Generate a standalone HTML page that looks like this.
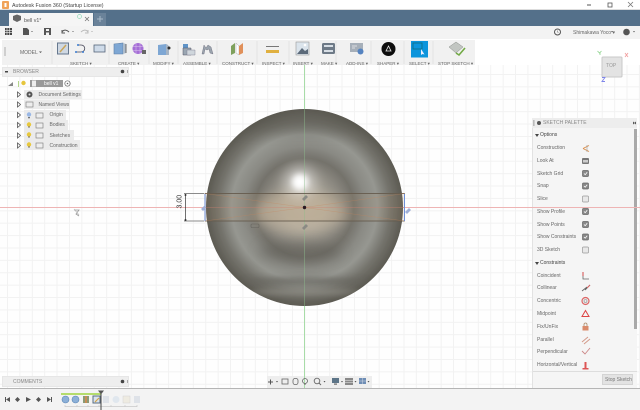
<!DOCTYPE html>
<html><head><meta charset="utf-8"><style>
html,body{margin:0;padding:0;width:640px;height:410px;overflow:hidden;background:#fff}
body{font-family:"Liberation Sans",sans-serif;position:relative}
.a{position:absolute}
.t{position:absolute;font-size:5px;line-height:7px;color:#666;white-space:nowrap;filter:blur(.35px);margin-top:.8px}
svg{position:absolute;left:0;top:0}
</style></head><body>
<div class="a" style="left:0;top:65px;width:640px;height:323px;background-color:#fefefe;background-image:linear-gradient(#f2f2f2 1px,transparent 1px),linear-gradient(90deg,#f2f2f2 1px,transparent 1px);background-size:12.4px 12.4px;background-position:7px 9px"></div>
<div class="a" style="left:0;top:0;width:640px;height:10px;background:#fff"></div>
<div class="a" style="left:0;top:9px;width:640px;height:1px;background:#ddd"></div>
<div class="a" style="left:0;top:10px;width:640px;height:16px;background:#54708a"></div>
<div class="a" style="left:94px;top:13px;width:12px;height:13px;background:#6a8299"></div>
<div class="a" style="left:9px;top:13px;width:84px;height:14px;background:#f5f5f5"></div>
<div class="a" style="left:0;top:26px;width:640px;height:13px;background:#f3f3f3"></div>
<div class="a" style="left:2px;top:40px;width:473px;height:25px;background:#f1f1f1"></div>
<div class="a" style="left:2px;top:67px;width:127px;height:10px;background:#eeeeee;border:1px solid #e6e6e6;box-sizing:border-box"></div>
<div class="a" style="left:2px;top:376px;width:127px;height:11px;background:#eeeeee;border:1px solid #e6e6e6;box-sizing:border-box"></div>
<div class="a" style="left:532px;top:118px;width:105px;height:272px;background:#f5f5f5;border-left:1px solid #e2e2e2;box-sizing:border-box"></div>
<div class="a" style="left:532px;top:118px;width:105px;height:10px;background:#ededed"></div>
<div class="a" style="left:634px;top:129px;width:3px;height:200px;background:#a9a9a9"></div>
<div class="a" style="left:533px;top:371px;width:104px;height:1px;background:#ddd"></div>
<div class="a" style="left:602px;top:374px;width:31px;height:11px;background:#e3e3e3;border:1px solid #d4d4d4;box-sizing:border-box"></div>
<div class="a" style="left:0;top:388px;width:640px;height:22px;background:#f3f3f3;border-top:1px solid #b5b5b5;box-sizing:border-box"></div>
<div class="a" style="left:267px;top:376px;width:105px;height:12px;background:#eeeeee"></div>

<svg width="640" height="410" viewBox="0 0 640 410">
<defs>
<radialGradient id="base" cx="304.5" cy="207.5" r="98.5" gradientUnits="userSpaceOnUse">
<stop offset="0" stop-color="#b3ad9f"/><stop offset=".2" stop-color="#aaa599"/>
<stop offset=".38" stop-color="#8b8880"/><stop offset=".5" stop-color="#74726b"/>
<stop offset=".62" stop-color="#8a8a84"/><stop offset=".74" stop-color="#969791"/>
<stop offset=".87" stop-color="#74736c"/><stop offset="1" stop-color="#5c5a52"/></radialGradient>
<filter id="b3" filterUnits="userSpaceOnUse" x="180" y="90" width="250" height="240"><feGaussianBlur stdDeviation="3"/></filter>
<filter id="b6" filterUnits="userSpaceOnUse" x="180" y="90" width="250" height="240"><feGaussianBlur stdDeviation="6"/></filter>
<filter id="b03" filterUnits="userSpaceOnUse" x="0" y="0" width="640" height="410"><feGaussianBlur stdDeviation=".35"/></filter>
<clipPath id="sp"><circle cx="304.5" cy="207.5" r="98.5"/></clipPath>
</defs>
<line x1="0" y1="207.5" x2="640" y2="207.5" stroke="#eeb4b4" stroke-width="1"/>
<line x1="304.5" y1="65" x2="304.5" y2="388" stroke="#a8dca8" stroke-width="1"/>
<circle cx="304.5" cy="207.5" r="98.5" fill="url(#base)" filter="url(#b03)"/>
<g clip-path="url(#sp)">
<ellipse cx="305" cy="122" rx="90" ry="12" fill="#56544d" opacity=".35" filter="url(#b6)"/>
<ellipse cx="300" cy="213" rx="46" ry="20" fill="#c2b5a1" opacity=".65" filter="url(#b6)"/>
<ellipse cx="300" cy="252" rx="42" ry="9" fill="#5d5b54" opacity=".5" filter="url(#b6)"/>
<ellipse cx="305" cy="281" rx="62" ry="3.500" fill="#64625b" opacity=".65" filter="url(#b3)"/>
<ellipse cx="305" cy="292" rx="55" ry="3" fill="#9a9890" opacity=".55" filter="url(#b3)"/>
<circle cx="300" cy="182" r="16" fill="#fff" opacity=".45" filter="url(#b6)"/>
<circle cx="300" cy="182" r="8" fill="#fff" filter="url(#b3)"/>
<line x1="304.5" y1="109" x2="304.5" y2="306" stroke="#8fbf8f" stroke-width=".8" opacity=".55"/>
</g>
<rect x="205" y="193.500" width="199.500" height="27.500" fill="#c89a70" fill-opacity=".1" stroke="#7a5f45" stroke-width=".7"/>
<line x1="205" y1="193.500" x2="404.500" y2="193.500" stroke="#5d5a52" stroke-width=".8" opacity=".8"/>
<line x1="205" y1="221" x2="404.500" y2="221" stroke="#5d5a52" stroke-width=".8" opacity=".8"/>
<line x1="205" y1="207.500" x2="404.500" y2="207.500" stroke="#d08070" stroke-width=".6" opacity=".7"/>
<path d="M205 193.500L304.500 207.500L404.500 193.500M205 221L304.500 207.500L404.500 221" stroke="#c8845a" stroke-width=".5" fill="none" opacity=".45"/>
<line x1="205" y1="194" x2="205" y2="221" stroke="#6e8fd6" stroke-width="1"/>
<line x1="404.500" y1="194" x2="404.500" y2="221" stroke="#6e8fd6" stroke-width="1"/>
<path d="M201 209l3-3 2 2-3 3zM405 212l4-4 2 2-4 4z" fill="#9fb0d8"/>
<circle cx="304.500" cy="207.500" r="1.700" fill="#2a1a22"/>
<path d="M302 199l4-4 2 2-4 4zM302 228l4-4 2 2-4 4z" fill="#8a8a84"/>
<rect x="251" y="224" width="8" height="3.500" rx="1" fill="none" stroke="#66645e" stroke-width=".6"/>
<path d="M184 193.500h20M184 221h20" stroke="#8b8b8b" stroke-width="1"/>
<line x1="185.500" y1="194" x2="185.500" y2="221" stroke="#333" stroke-width=".7"/>
<circle cx="185.500" cy="195" r="1" fill="#333"/><circle cx="185.500" cy="220" r="1" fill="#333"/>
<path d="M74 210h5l-3 4 3 2" stroke="#999" stroke-width=".8" fill="none"/>
<path d="M74 209l5 6" stroke="#bbb" stroke-width=".8"/>

<g filter="url(#b03)">
<rect x="2" y="1" width="7" height="8" rx="1" fill="#f0a35a"/>
<rect x="4.500" y="3" width="2" height="4" fill="#fff"/>
<path d="M587 5h4" stroke="#555"/><rect x="608" y="3" width="4" height="4" fill="none" stroke="#555" stroke-width=".8"/><path d="M628 2l5 5M633 2l-5 5" stroke="#777" stroke-width=".8"/>
<path d="M13 16l4-1.500 4 1.500v4l-4 2-4-2z" fill="#666"/>
<path d="M85 17l4 4M89 17l-4 4" stroke="#777" stroke-width=".8"/>
<circle cx="79.500" cy="16.500" r="2" fill="none" stroke="#8fd8b8" stroke-width=".7"/>
<path d="M100 16v6M97 19h6" stroke="#a9bac9" stroke-width="1"/>
<g fill="#444"><rect x="5" y="28" width="7" height="7"/></g>
<path d="M7 28v7M9.500 28v7M5 30.300h7M5 32.600h7" stroke="#f3f3f3" stroke-width=".6"/>
<path d="M23 28h4l2 2v5h-6z" fill="#555"/><path d="M31 31h2l-1 1z" fill="#555"/>
<rect x="44" y="28" width="7" height="7" fill="#555"/><rect x="46" y="29" width="3" height="2" fill="#f3f3f3"/><rect x="46" y="32.500" width="3" height="2.500" fill="#f3f3f3"/>
<path d="M62 32c2-3 5-2 7 0M62 30v3h3" stroke="#555" stroke-width="1" fill="none"/><path d="M72 31h2l-1 1z" fill="#666"/>
<path d="M88 32c-2-3-5-2-7 0M88 30v3h-3" stroke="#bbb" stroke-width="1" fill="none"/><path d="M91 31h2l-1 1z" fill="#aaa"/>
<circle cx="557.500" cy="32" r="3" fill="none" stroke="#555" stroke-width="1"/><path d="M557.500 30.500v1.500l1 1" stroke="#555" stroke-width=".5" fill="none"/>
<circle cx="626.500" cy="32" r="3.300" fill="#555"/><path d="M633 31h2l-1 1.500z" fill="#666"/><path d="M611 31h2l-1 1.500z" fill="#666"/>

<path d="M5 47v9" stroke="#cfcfcf" stroke-width="2"/>
<path d="M52 41v23M109 41v23M149 41v23M178 41v23M217 41v23M257 41v23M289 41v23M336 41v23M371 41v23M404 41v23M433 41v23" stroke="#dcdcdc" stroke-width=".7"/>
<path d="M39 51.500h3l-1.500 1.500z" fill="#555"/>
<rect x="57.500" y="43" width="11" height="11" fill="#cfd8e3" stroke="#66788e"/>
<path d="M60 52l6-7" stroke="#c9a55a" stroke-width="1.500"/>
<path d="M76 52h5c5 0 5-7 0-7h-3" fill="none" stroke="#445" stroke-width=".8"/>
<circle cx="76" cy="52" r="1" fill="#3a7bd0"/><circle cx="83" cy="52" r="1" fill="#3a7bd0"/><circle cx="78" cy="45" r="1" fill="#3a7bd0"/>
<rect x="94" y="45" width="11" height="7" fill="#cfdbe9" stroke="#55657a" stroke-width=".8"/>
<path d="M114 44l9-1v11h-9z" fill="#7ea7d4" stroke="#5e7fa6" stroke-width=".6"/><path d="M123 43l3 1v9l-3 1z" fill="#aebccb"/>
<path d="M126 44v9" stroke="#555" stroke-width=".8"/>
<circle cx="138" cy="48.500" r="5.500" fill="#a56ed6"/><path d="M133 46.500h10M133 50.500h10M136 43.500v10M140 43.500v10" stroke="#ddc8ee" stroke-width=".5"/>
<rect x="142" y="50" width="4" height="4" fill="#666"/>
<path d="M158 45l8-1 2 1v10h-10z" fill="#7ea7d4"/><path d="M166 44l3 2v9h-3z" fill="#a6b4c4"/><circle cx="169" cy="48" r="1.500" fill="#333"/>
<rect x="183" y="44" width="5" height="5" fill="#5f93c7"/><path d="M183 48h8v7h-8z" fill="#9aa6b2" stroke="#556" stroke-width=".5"/><path d="M187 50h8v5h-8z" fill="#cfd6dc" stroke="#778" stroke-width=".4"/>
<path d="M202 54l2-9 2 3 2-3 3 2 2 7-3-1-1-4-2 1-2-1-1 5z" fill="#9aa3ad" stroke="#667" stroke-width=".4"/>
<path d="M231 46l4-3v10l-4 2z" fill="#7ea05c"/><path d="M236 43l3 3v9l-3-2z" fill="#fff" stroke="#999" stroke-width=".4"/><path d="M239 46l4-3v10l-4 2z" fill="#e0905a"/>
<rect x="266" y="46" width="13" height="1" fill="#777"/><rect x="266" y="50" width="13" height="3" fill="#e0b040"/>
<rect x="296" y="42" width="13" height="13" fill="#dbe4ec" stroke="#999" stroke-width=".6"/><path d="M297 54l5-6 3 3 3-2v5z" fill="#5b6b7a"/><circle cx="305" cy="45" r="1.300" fill="#fff"/>
<rect x="322" y="43" width="13" height="11" rx="1.500" fill="#6e7a87"/><rect x="324" y="45" width="9" height="2" fill="#d7dee5"/><rect x="324" y="50" width="9" height="2" fill="#d7dee5"/>
<rect x="350" y="43" width="13" height="9" fill="#a6afb9"/><path d="M352 46h5M352 48h3" stroke="#eee" stroke-width=".7"/><circle cx="360.500" cy="51.500" r="3" fill="#5583c0"/>
<circle cx="388.500" cy="49" r="7" fill="#0a0a0a"/><path d="M388.500 46l-2.500 5h5z" fill="none" stroke="#eee" stroke-width=".8"/>
<rect x="411" y="41" width="17" height="16.500" fill="#1095dc"/><rect x="413" y="43" width="9" height="6" fill="none" stroke="#0d6c80" stroke-width=".8"/><path d="M421 49v6l1.500-1 2 .5z" fill="#eef"/>
<path d="M449 47l7-5 7 5-7 6z" fill="#c2c6c2" stroke="#8a8e8a" stroke-width=".5"/><path d="M456 53l3 2 6-7" fill="none" stroke="#72aa45" stroke-width="1.600"/>

<rect x="5" y="71" width="3" height="1.500" fill="#444"/>
<circle cx="122.500" cy="71.500" r="1.800" fill="#444"/><rect x="127" y="70" width=".8" height="3" fill="#999"/>
<path d="M13 86l0-4-5 4z" fill="#888"/><rect x="18" y="81" width="1" height="6" fill="#b4d68a"/>
<circle cx="23.500" cy="83" r="2.200" fill="#e6c63c"/>
<rect x="30" y="80" width="33" height="7" fill="#9a9a9a"/><rect x="32" y="80.500" width="4" height="6" fill="#eee"/>
<circle cx="67.500" cy="83.500" r="2.700" fill="none" stroke="#666" stroke-width=".7"/><circle cx="67.500" cy="83.500" r=".8" fill="#666"/>
<g fill="#ebebeb"><rect x="24" y="90" width="58" height="9"/><rect x="24" y="100" width="46" height="9"/><rect x="24" y="110" width="42" height="10"/><rect x="24" y="120" width="44" height="10"/><rect x="24" y="130" width="50" height="10"/><rect x="24" y="140" width="56" height="10"/></g>
<g fill="none" stroke="#555" stroke-width=".8"><path d="M17.500 92v5l3-2.500zM17.500 102v5l3-2.500zM17.500 112.500v5l3-2.500zM17.500 122.500v5l3-2.500zM17.500 133v5l3-2.500zM17.500 143v5l3-2.500z"/></g>
<circle cx="29.500" cy="94.500" r="3" fill="#555"/><circle cx="29.500" cy="94.500" r="1" fill="#ddd"/>
<g fill="#eee" stroke="#777" stroke-width=".6"><rect x="26" y="102" width="7" height="5"/><rect x="36" y="113" width="7" height="5"/><rect x="36" y="123" width="7" height="5"/><rect x="36" y="133" width="7" height="5"/><rect x="36" y="143" width="7" height="5"/></g>
<circle cx="29" cy="114.500" r="2.200" fill="#9ab8e6"/><rect x="28" y="117" width="2" height="1.300" fill="#777"/>
<g fill="#e8c83c"><circle cx="29" cy="124.500" r="2.200"/><circle cx="29" cy="134.500" r="2.200"/><circle cx="29" cy="144.500" r="2.200"/></g>
<path d="M28 127h2M28 137h2M28 147h2" stroke="#777" stroke-width="1"/>

<rect x="602" y="57" width="20" height="20" rx="1" fill="#e3e3e3" stroke="#c8c8c8" stroke-width="1"/>
<path d="M600 52l0 3M597.500 51l2 2 2-2" stroke="#8fd48f" stroke-width=".8" fill="none"/>
<path d="M625 53l3 4M628 53l-3 4" stroke="#f2a0a0" stroke-width=".9"/>
<path d="M602 77.500h3l-3 4h3" stroke="#7f86ea" stroke-width=".9" fill="none"/>

<circle cx="539" cy="123" r="2" fill="#555"/><rect x="533.500" y="120" width=".8" height="6" fill="#888"/><path d="M633 121.500l2 1.500-2 1.500zM636 121.500l-2 1.500 2 1.500z" fill="#555"/>
<path d="M535 134h4l-2 3zM535 262h4l-2 3z" fill="#444"/>
<path d="M583 148.500l6-3M583 148.500l6 3" stroke="#d98b45" stroke-width=".9"/><path d="M587 145v7" stroke="#999" stroke-width=".6"/>
<rect x="582" y="158" width="7" height="6" rx="1" fill="#777"/><rect x="583" y="160" width="5" height="2.500" fill="#ccc"/>
<g fill="#e8e8e8" stroke="#666" stroke-width=".7">
<rect x="582.500" y="170.500" width="6" height="6" rx="1" fill="#888"/><rect x="582.500" y="183" width="6" height="6" rx="1" fill="#888"/>
<rect x="582.500" y="196" width="6" height="6" rx="1" stroke="#999"/><rect x="582.500" y="208.500" width="6" height="6" rx="1" fill="#888"/>
<rect x="582.500" y="221.500" width="6" height="6" rx="1" fill="#888"/><rect x="582.500" y="234" width="6" height="6" rx="1" fill="#888"/>
<rect x="582.500" y="247" width="6" height="6" rx="1" stroke="#999"/></g>
<path d="M584 173.500l1.200 1.200 2-2.500M584 186l1.200 1.200 2-2.500M584 211.500l1.200 1.200 2-2.500M584 224.500l1.200 1.200 2-2.500M584 237l1.200 1.200 2-2.500" stroke="#fff" stroke-width=".8" fill="none"/>
<path d="M583 272v7h6" stroke="#666" stroke-width=".8" fill="none"/><path d="M583 272v4" stroke="#d44" stroke-width=".9"/>
<path d="M582 291l5-4M585 290l5-5" stroke="#666" stroke-width=".9"/><path d="M587 288l3-3" stroke="#d66" stroke-width=".9"/>
<circle cx="585.500" cy="301" r="3.500" fill="#eee" stroke="#d66" stroke-width="1.200"/><circle cx="585.500" cy="301" r="1.500" fill="none" stroke="#888" stroke-width=".6"/>
<path d="M585.500 310.500l3.500 6h-7z" fill="none" stroke="#d44" stroke-width="1"/>
<rect x="582.500" y="326" width="6" height="4.500" fill="#d98a6a"/><path d="M584 326v-1.500a1.500 1.500 0 0 1 3 0v1.500" stroke="#a86" fill="none" stroke-width=".8"/>
<path d="M582 342l6-5M584 344l6-5" stroke="#d49a8a" stroke-width="1"/>
<path d="M582 351l3 3 5-6" stroke="#c88" stroke-width=".9" fill="none"/>
<rect x="584.500" y="362" width="2" height="6" fill="#d55"/><rect x="582.500" y="368" width="6" height="1.500" fill="#d55"/>

<circle cx="122.500" cy="381.500" r="1.800" fill="#444"/><rect x="127" y="380" width=".8" height="3" fill="#999"/>
<path d="M268 382h5M270.500 379.500v5" stroke="#555" stroke-width="1"/><path d="M276 381h2l-1 1.500z" fill="#555"/>
<rect x="282" y="379" width="6" height="5" fill="none" stroke="#666" stroke-width=".8"/>
<rect x="293" y="378.500" width="5" height="6" rx="2" fill="none" stroke="#666" stroke-width=".8"/>
<circle cx="305" cy="381" r="2.500" fill="none" stroke="#666" stroke-width=".8"/><path d="M305 383v2" stroke="#666"/>
<circle cx="317" cy="381" r="2.800" fill="none" stroke="#666" stroke-width=".9"/><path d="M319 383l2 2" stroke="#666" stroke-width="1"/><path d="M323.500 381h2l-1 1.500z" fill="#555"/>
<rect x="332" y="378" width="7" height="5" fill="#5d7488"/><rect x="334" y="383.500" width="3" height="1.200" fill="#666"/><path d="M341 381h2l-1 1.500z" fill="#555"/>
<rect x="345" y="378" width="8" height="7" fill="#888"/><path d="M345 380.300h8M345 382.600h8" stroke="#eee" stroke-width=".5"/><path d="M354.500 381h2l-1 1.500z" fill="#555"/>
<rect x="359" y="378" width="7" height="6" fill="#6e8db5"/><path d="M362.500 378v6M359 381h7" stroke="#eee" stroke-width=".4"/><path d="M367.500 381h2l-1 1.500z" fill="#555"/>

<g fill="#555"><rect x="5" y="397" width="1" height="5"/><path d="M6 399.500l4-2.500v5zM15 399.500l2.500-2.500 2.500 2.500-2.500 2.500zM26 397l5 2.500-5 2.500zM36 399.500l2.500-2.500 2.500 2.500-2.500 2.500zM47 397l4 2.500-4 2.500z"/><rect x="51" y="397" width="1" height="5"/></g>
<rect x="61" y="393" width="40" height="2" fill="#b4dc6c"/>
<path d="M65 406.500h72M65 405v2M77 405v2M88 405v2M99 405v2M111 405v2M125 405v2M137 405v2" stroke="#c9c9c9" stroke-width=".7" fill="none"/>
<circle cx="65.500" cy="399.500" r="3.500" fill="#8cb0d8" stroke="#5b86b5" stroke-width=".6"/>
<circle cx="75.500" cy="399.500" r="3.500" fill="#8cb0d8" stroke="#5b86b5" stroke-width=".6"/>
<rect x="83" y="396" width="6" height="7" fill="#8b9a74"/><path d="M86 396v7" stroke="#d9894d" stroke-width="1.500"/>
<rect x="93" y="396" width="7" height="7" fill="#d8e3ee" stroke="#5a6d82"/><path d="M95 402l4-4" stroke="#d4a545" stroke-width="1.200"/>
<path d="M98 390.500h6l-3 4z" fill="#555"/><path d="M101 394v16" stroke="#444" stroke-width="1"/>
<g opacity=".35"><rect x="103" y="396" width="6" height="7" fill="#b7c4d3"/><circle cx="116" cy="399.500" r="3.500" fill="#bcd0e6"/><rect x="123" y="396" width="7" height="7" fill="#e6dcc0" stroke="#999" stroke-width=".5"/><rect x="134" y="396" width="6" height="7" fill="#b7c4d3"/></g>
</g>
</svg>

<div class="t" style="left:12px;top:2px;font-size:5.300px;color:#444">Autodesk Fusion 360 (Startup License)</div>
<div class="t" style="left:24px;top:17px;font-size:5.300px;color:#555">bell v1*</div>
<div class="t" style="left:20px;top:49px">MODEL</div>
<div class="t" style="left:70px;top:59px;font-size:4.500px">SKETCH ▾</div>
<div class="t" style="left:118px;top:59px;font-size:4.500px">CREATE ▾</div>
<div class="t" style="left:153px;top:59px;font-size:4.500px">MODIFY ▾</div>
<div class="t" style="left:183px;top:59px;font-size:4.500px">ASSEMBLE ▾</div>
<div class="t" style="left:222px;top:59px;font-size:4.500px">CONSTRUCT ▾</div>
<div class="t" style="left:262px;top:59px;font-size:4.500px">INSPECT ▾</div>
<div class="t" style="left:293px;top:59px;font-size:4.500px">INSERT ▾</div>
<div class="t" style="left:321px;top:59px;font-size:4.500px">MAKE ▾</div>
<div class="t" style="left:346px;top:59px;font-size:4.500px">ADD-INS ▾</div>
<div class="t" style="left:377px;top:59px;font-size:4.500px">SHAPER ▾</div>
<div class="t" style="left:409px;top:59px;font-size:4.500px">SELECT ▾</div>
<div class="t" style="left:438px;top:59px;font-size:4.500px">STOP SKETCH ▾</div>
<div class="t" style="left:573px;top:29px">Shimakawa Yoco ▾</div>
<div class="t" style="left:606px;top:62px;color:#999">TOP</div>
<div class="t" style="left:13px;top:68.500px;color:#888">BROWSER</div>
<div class="t" style="left:44px;top:80px;color:#fff">bell v1</div>
<div class="t" style="left:38.500px;top:91px">Document Settings</div>
<div class="t" style="left:38.500px;top:101px">Named Views</div>
<div class="t" style="left:49.500px;top:111.500px">Origin</div>
<div class="t" style="left:49.500px;top:121.500px">Bodies</div>
<div class="t" style="left:49.500px;top:132px">Sketches</div>
<div class="t" style="left:49.500px;top:142px">Construction</div>
<div class="t" style="left:13px;top:378px;color:#888">COMMENTS</div>
<div class="t" style="left:174px;top:198px;width:12px;text-align:center;color:#333;font-size:7px;transform:rotate(-90deg);transform-origin:center">3.00</div>
<div class="t" style="left:543px;top:119.500px;color:#888">SKETCH PALETTE</div>
<div class="t" style="left:540px;top:131.500px;color:#444">Options</div>
<div class="t" style="left:537px;top:144.500px">Construction</div>
<div class="t" style="left:537px;top:157px">Look At</div>
<div class="t" style="left:537px;top:170px">Sketch Grid</div>
<div class="t" style="left:537px;top:182.500px">Snap</div>
<div class="t" style="left:537px;top:195.500px">Slice</div>
<div class="t" style="left:537px;top:208px">Show Profile</div>
<div class="t" style="left:537px;top:221px">Show Points</div>
<div class="t" style="left:537px;top:233.500px">Show Constraints</div>
<div class="t" style="left:537px;top:246.500px">3D Sketch</div>
<div class="t" style="left:540px;top:259.500px;color:#444">Constraints</div>
<div class="t" style="left:537px;top:272px">Coincident</div>
<div class="t" style="left:537px;top:284.500px">Collinear</div>
<div class="t" style="left:537px;top:297.500px">Concentric</div>
<div class="t" style="left:537px;top:310.500px">Midpoint</div>
<div class="t" style="left:537px;top:323px">Fix/UnFix</div>
<div class="t" style="left:537px;top:336px">Parallel</div>
<div class="t" style="left:537px;top:348.500px">Perpendicular</div>
<div class="t" style="left:537px;top:361.500px">Horizontal/Vertical</div>
<div class="t" style="left:605px;top:376px;color:#777">Stop Sketch</div>
</body></html>
